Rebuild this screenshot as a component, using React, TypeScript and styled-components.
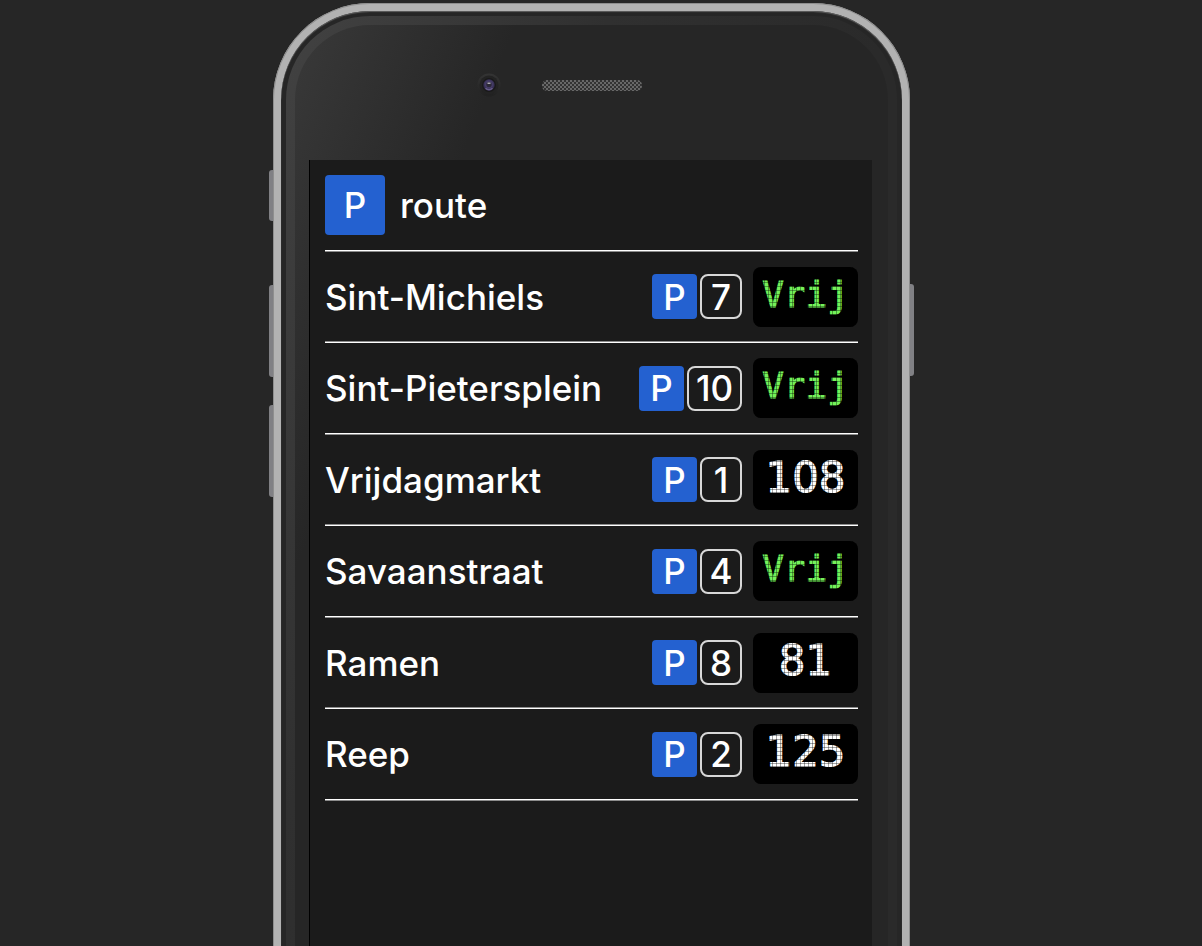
import React from 'react';
import styled, { createGlobalStyle } from 'styled-components';

const GlobalStyle = createGlobalStyle`
  * { box-sizing: border-box; }
  body {
    margin: 0;
    background: #262626;
    color: #fff;
    font-family: Inter, Roboto, "Liberation Sans", sans-serif;
    font-size: 35px;
    font-weight: 500;
    line-height: 44px;
  }
`;

const Page = styled.main`
  display: flex;
  justify-content: center;
  align-items: flex-start;
  height: 100vh;
  overflow: hidden;
  padding: 3px 19px 0 0;
`;

const Phone = styled.div`
  position: relative;
  width: 100%;
  max-width: 637px;
  padding: 8px;
  border-radius: 97px;
  background: #b2b2b2;
  box-shadow: inset 0 0 0 1px #8e8e8e;
`;

const SideButton = styled.span<{ $side: 'left' | 'right'; $top: number; $length: number }>`
  position: absolute;
  ${p => p.$side}: -4px;
  top: ${p => p.$top}px;
  width: 4px;
  height: ${p => p.$length}px;
  border-radius: ${p => (p.$side === 'left' ? '3px 0 0 3px' : '0 3px 3px 0')};
  background: #808084;
`;

const Gasket = styled.div`
  padding: 5px;
  border-radius: 89px;
  background: #262626;
  box-shadow: inset 0 1px 1px #606060;
`;

const Bezel = styled.div`
  padding: 9px;
  border-radius: 84px;
  background: linear-gradient(112deg, #424242 0, #303030 300px, #2a2a2a 560px);
`;

const Face = styled.div`
  padding: 0 16px 135px 14px;
  border-radius: 75px;
  background: linear-gradient(112deg, #393939 0, #262626 205px);
`;

const Sensors = styled.div`
  display: grid;
  grid-template-columns: 1fr auto 1fr;
  column-gap: 41px;
  align-items: center;
  height: 135px;
  padding: 0 0 15px 2px;
`;

const CameraIcon = styled.svg`
  display: block;
  justify-self: end;
`;

const SpeakerIcon = styled.svg`
  display: block;
`;

const Screen = styled.section`
  min-height: 1000px;
  padding: 0 14px 0 15px;
  border-left: 1px solid #000;
  background: #1b1b1b;
`;

const ruleDown = 'linear-gradient(#fff 50%, #8c8c8c 50%)';
const ruleUp = 'linear-gradient(#8c8c8c 50%, #fff 50%)';

const Header = styled.header`
  display: flex;
  align-items: center;
  gap: 15px;
  height: 92px;
  padding-bottom: 2px;
  background: ${ruleDown} bottom / 100% 2px no-repeat;
`;

const Title = styled.h1`
  margin: 0;
  font: inherit;
`;

const Sign = styled.span<{ $large?: boolean }>`
  display: flex;
  align-items: center;
  justify-content: center;
  width: ${p => (p.$large ? 60 : 45)}px;
  height: ${p => (p.$large ? 60 : 45)}px;
  border-radius: 4px;
  background: #2461d0;
`;

const List = styled.ul`
  display: grid;
  grid-auto-rows: 91px 92px;
  margin: 0;
  padding: 0;
  list-style: none;
`;

const Row = styled.li`
  display: flex;
  align-items: center;
  padding-bottom: 2px;
  background: ${ruleUp} bottom / 100% 2px no-repeat;

  &:nth-child(even) {
    background-image: ${ruleDown};
  }
`;

const Name = styled.span`
  flex: 1;
  min-width: 0;
  white-space: nowrap;
`;

const Code = styled.span`
  display: flex;
  gap: 3px;
  margin-right: 11px;
`;

const CodeNumber = styled.span`
  display: flex;
  align-items: center;
  justify-content: center;
  min-width: 42px;
  height: 45px;
  padding: 0 7px;
  border: 2px solid #d8d8d8;
  border-radius: 8px;
`;

const Led = styled.output<{ $free: boolean }>`
  position: relative;
  display: flex;
  align-items: center;
  justify-content: center;
  width: 105px;
  height: 60px;
  padding-bottom: 4px;
  border-radius: 8px;
  background: #000;
  color: ${p => (p.$free ? '#74f25a' : '#fff')};
  font-family: ${p => (p.$free ? '"DejaVu Sans Mono", monospace' : '"DejaVu Sans", sans-serif')};
  font-size: ${p => (p.$free ? 36 : 42)}px;
  font-weight: 400;
  -webkit-text-stroke: 1px currentColor;

  /* dark grid that breaks the characters into lamps */
  &::after {
    content: '';
    position: absolute;
    inset: 0;
    border-radius: 8px;
    background:
      repeating-linear-gradient(90deg, transparent 0 3px, rgba(0, 0, 0, 0.35) 3px 4px),
      repeating-linear-gradient(transparent 0 3px, rgba(0, 0, 0, 0.35) 3px 4px);
  }
`;

const parkings = [
  { name: 'Sint-Michiels', code: 7, status: 'Vrij' },
  { name: 'Sint-Pietersplein', code: 10, status: 'Vrij' },
  { name: 'Vrijdagmarkt', code: 1, status: '108' },
  { name: 'Savaanstraat', code: 4, status: 'Vrij' },
  { name: 'Ramen', code: 8, status: '81' },
  { name: 'Reep', code: 2, status: '125' },
];

function Camera() {
  return (
    <CameraIcon width="24" height="24" viewBox="0 0 24 24" aria-hidden="true">
      <defs>
        <linearGradient id="rim" x1="0" y1="0" x2="0" y2="1">
          <stop offset="0" stopColor="#343434" />
          <stop offset="1" stopColor="#212121" />
        </linearGradient>
        <radialGradient id="lens" cx="0.5" cy="0.45" r="0.55">
          <stop offset="0" stopColor="#3a3550" />
          <stop offset="0.55" stopColor="#453c68" />
          <stop offset="1" stopColor="#2b2542" />
        </radialGradient>
      </defs>
      <circle cx="12" cy="12" r="11.5" fill="url(#rim)" />
      <circle cx="12" cy="12" r="9.5" fill="#232323" />
      <circle cx="12" cy="12" r="7" fill="#191919" />
      <circle cx="12" cy="12" r="5.7" fill="url(#lens)" />
      <path d="M8.5 15.2a5 5 0 0 0 7 0" fill="none" stroke="#7b6fa0" strokeWidth="1.6" opacity="0.7" />
      <circle cx="12" cy="11.5" r="2.6" fill="#2c2938" />
      <rect x="10.5" y="9.5" width="3" height="1.5" fill="#aaa8b0" />
    </CameraIcon>
  );
}

function Speaker() {
  return (
    <SpeakerIcon width="100" height="11" viewBox="0 0 100 11" aria-hidden="true">
      <defs>
        <pattern id="mesh" width="4" height="4" patternUnits="userSpaceOnUse">
          <rect width="4" height="4" fill="#333" />
          <rect width="2" height="2" fill="#686868" />
          <rect x="2" y="2" width="2" height="2" fill="#686868" />
        </pattern>
      </defs>
      <rect width="100" height="11" rx="5" fill="url(#mesh)" />
    </SpeakerIcon>
  );
}

export default function App() {
  return (
    <>
      <GlobalStyle />
      <Page>
        <Phone>
          <SideButton $side="left" $top={167} $length={51} />
          <SideButton $side="left" $top={282} $length={92} />
          <SideButton $side="left" $top={402} $length={92} />
          <SideButton $side="right" $top={281} $length={92} />
          <Gasket>
            <Bezel>
              <Face>
                <Sensors>
                  <Camera />
                  <Speaker />
                </Sensors>
                <Screen>
                  <Header>
                    <Sign $large>P</Sign>
                    <Title>route</Title>
                  </Header>
                  <List>
                    {parkings.map(p => (
                      <Row key={p.name}>
                        <Name>{p.name}</Name>
                        <Code>
                          <Sign>P</Sign>
                          <CodeNumber>{p.code}</CodeNumber>
                        </Code>
                        <Led $free={p.status === 'Vrij'}>{p.status}</Led>
                      </Row>
                    ))}
                  </List>
                </Screen>
              </Face>
            </Bezel>
          </Gasket>
        </Phone>
      </Page>
    </>
  );
}
